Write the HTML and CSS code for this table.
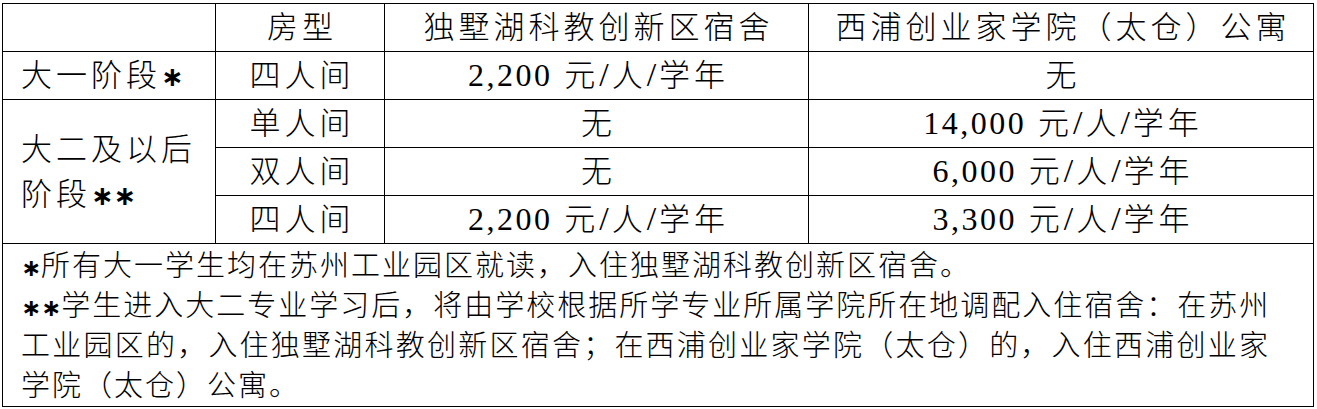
FILE: index.html
```html
<!DOCTYPE html>
<html lang="zh-CN">
<head>
<meta charset="utf-8">
<title>宿舍费用</title>
<link rel="stylesheet" href="styles.css">
</head>
<body>
<div class="page">
<table class="fees">
<colgroup><col class="c1"><col class="c2"><col class="c3"><col class="c4"></colgroup>
<thead>
<tr class="r"><th></th><th>房型</th><th>独墅湖科教创新区宿舍</th><th>西浦创业家学院（太仓）公寓</th></tr>
</thead>
<tbody>
<tr class="r"><td class="stage">大一阶段<span class="star">∗</span></td><td>四人间</td><td><span class="n">2,200</span> 元<span class="sl">/</span>人<span class="sl">/</span>学年</td><td>无</td></tr>
<tr class="r"><td class="stage two" rowspan="3">大二及以后<br>阶段<span class="star">∗∗</span></td><td>单人间</td><td>无</td><td><span class="n">14,000</span> 元<span class="sl">/</span>人<span class="sl">/</span>学年</td></tr>
<tr class="r"><td>双人间</td><td>无</td><td><span class="n">6,000</span> 元<span class="sl">/</span>人<span class="sl">/</span>学年</td></tr>
<tr class="r"><td>四人间</td><td><span class="n">2,200</span> 元<span class="sl">/</span>人<span class="sl">/</span>学年</td><td><span class="n">3,300</span> 元<span class="sl">/</span>人<span class="sl">/</span>学年</td></tr>
<tr><td class="note" colspan="4">
<span class="line"><span class="star">∗</span>所有大一学生均在苏州工业园区就读，入住独墅湖科教创新区宿舍。</span>
<span class="line just"><span class="star">∗∗</span>学生进入大二专业学习后，将由学校根据所学专业所属学院所在地调配入住宿舍：在苏州</span>
<span class="line just">工业园区的，入住独墅湖科教创新区宿舍；在西浦创业家学院（太仓）的，入住西浦创业家</span>
<span class="line">学院（太仓）公寓。</span>
</td></tr>
</tbody>
</table>
</div>
</body>
</html>
```
FILE: styles.css
```css
html, body {
  margin: 0;
  padding: 0;
  background: #fff;
}
.page {
  padding: 3px 0 0 2px;
}
.fees {
  border-collapse: collapse;
  table-layout: fixed;
  width: 1311px;
  color: #000;
  font-family: "Liberation Serif", "Noto Sans CJK SC", serif;
  font-size: 31px;
  font-weight: 300;
  letter-spacing: 4px;
}
.c1 { width: 213px; }
.c2 { width: 169px; }
.c3 { width: 424px; }
.c4 { width: 505px; }
.fees th, .fees td {
  border: 1px solid #000;
  padding: 0 0 0 4px;
  text-align: center;
  vertical-align: middle;
  font-weight: 300;
  line-height: 44px;
  white-space: nowrap;
}
.fees .r {
  height: 48px;
}
.fees td.stage {
  text-align: left;
  padding-left: 18px;
}
.fees td.two {
  line-height: 45px;
}
.n {
  font-size: 32px;
  letter-spacing: 2.5px;
}
.sl {
  font-size: 34px;
  letter-spacing: 3px;
}
.star {
  font-family: "DejaVu Sans", sans-serif;
  font-weight: 700;
  font-size: 27px;
  letter-spacing: 0;
  line-height: 1;
}
.fees td.note {
  text-align: left;
  padding: 2px 43px 0 18px;
  font-size: 29px;
  letter-spacing: 2px;
  line-height: 40px;
}
.note .star {
  font-size: 24px;
}
.line {
  display: block;
  height: 40px;
  white-space: nowrap;
}
.line.just {
  text-align: justify;
  text-align-last: justify;
}
```
